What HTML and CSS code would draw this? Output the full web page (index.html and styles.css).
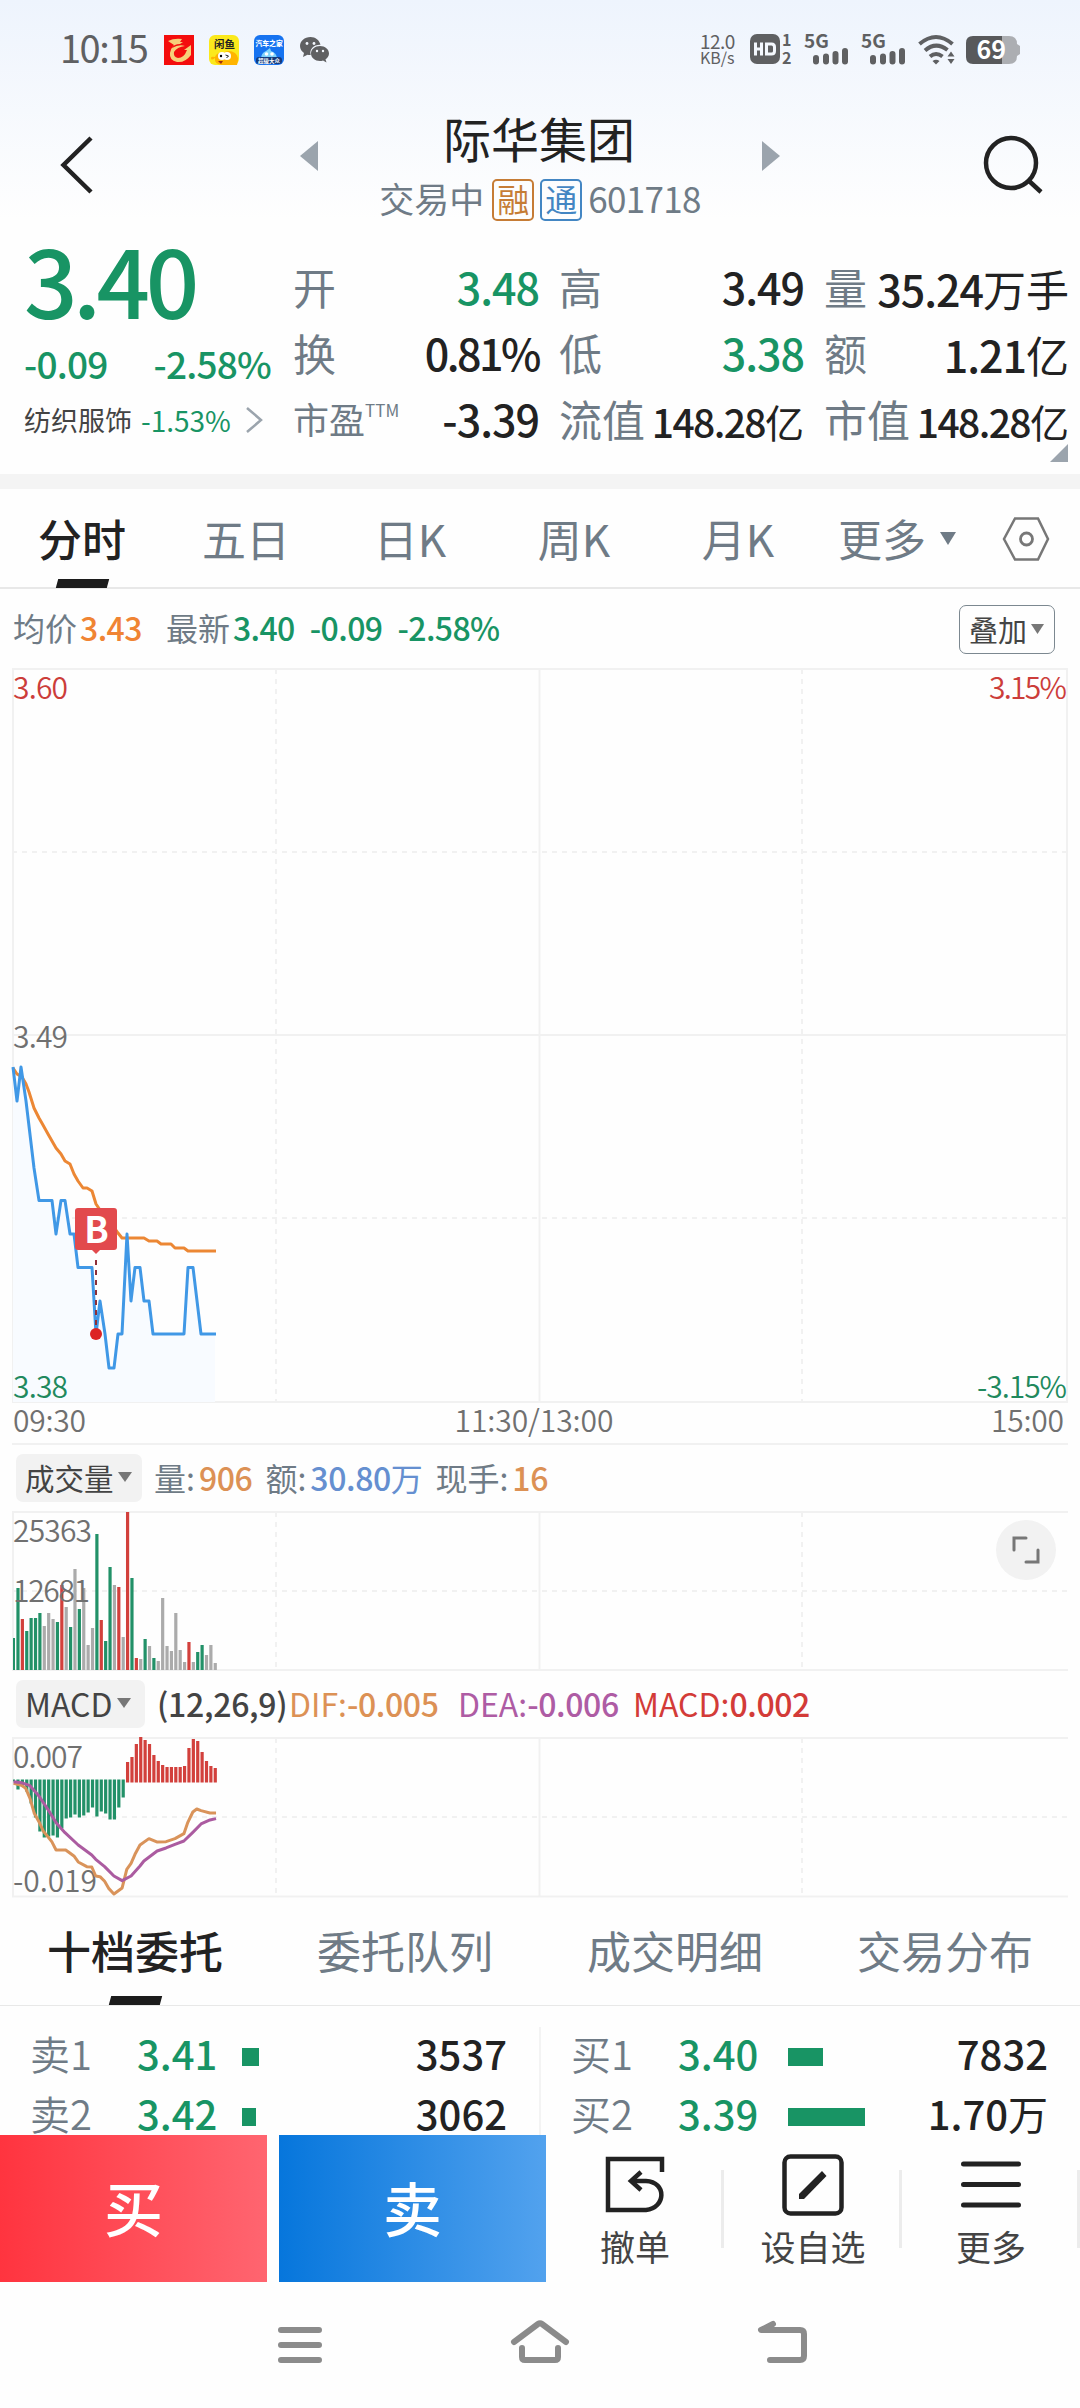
FILE: index.html
```html
<!DOCTYPE html>
<html lang="zh-CN">
<head>
<meta charset="utf-8">
<title>际华集团 601718</title>
<link rel="stylesheet" href="styles.css">
</head>
<body>
<div class="page">

<header class="top">
  <div class="status">
    <span class="clock">10:15</span>
    <svg class="app" width="30" height="30" viewBox="0 0 30 30"><rect width="30" height="30" fill="#f40d0d"/><path d="M4 6q6-3 14-2l-2 3h3l-3 2q-6 0-8 4 7-4 13-2-8 1-11 6-1 5 4 6 6 0 9-8l-3 0 7-5v10q-6 8-14 7-8-2-7-9 1-5 4-8-3-2-6-4z" fill="#f6cf7a"/></svg>
    <svg class="app" width="30" height="30" viewBox="0 0 30 30"><rect width="30" height="30" rx="6" fill="#fbe91c"/><path d="M13 30q-8-1-7-7-4 3-4 0 0-2 4-1 2-5 8-4 6-4 12 0 5 4 2 12z" fill="#ffb400"/><text x="5" y="13" font-size="10.500" font-weight="700" fill="#222">闲鱼</text><circle cx="13" cy="21" r="4" fill="#fff"/><circle cx="18" cy="21" r="4" fill="#fff"/><circle cx="12" cy="21" r="1.200"/><path d="M16.500 20l3 1-2 2" stroke="#222" fill="none"/><path d="M9 26h5l-2 3z" fill="#9c2b10"/></svg>
    <svg class="app" width="30" height="30" viewBox="0 0 30 30"><rect width="30" height="30" rx="6" fill="#1673f0"/><text x="1.500" y="11" font-size="6.800" font-weight="900" fill="#fff">汽车之家</text><path d="M7 24q0-6 5-8l4-3 1 3q6 2 6 8z" fill="#7fd2fb"/><circle cx="12.500" cy="19" r="1.800" fill="#fff"/><circle cx="18" cy="19" r="1.800" fill="#fff"/><rect x="2" y="22" width="26" height="7" rx="3" fill="#133a7c"/><text x="4" y="28" font-size="5.500" font-weight="700" fill="#fff">超级大众</text></svg>
    <svg class="wechat" width="29" height="26" viewBox="0 0 29 26"><path d="M10.500 0C4.500 0 0 4 0 9c0 3 1.500 5.300 4 7l-1 4 4.500-2.300q1.600.4 3.200.3C9 12 14 7.500 20.500 7.800 19.500 3.300 15.500 0 10.500 0z" fill="#5f6062"/><path d="M20 9c-5 0-9 3.300-9 7.500s4 7.500 9 7.500q1.500 0 3-.5L26.500 25.500l-1-3.200c2-1.400 3.500-3.400 3.500-5.800C29 12.300 25 9 20 9z" fill="#5f6062"/><g fill="#f4f8fe"><circle cx="7" cy="6.500" r="1.400"/><circle cx="14" cy="6.500" r="1.400"/><circle cx="17" cy="14" r="1.200"/><circle cx="23" cy="14" r="1.200"/></g></svg>
    <span class="speed"><b>12.0</b><i>KB/s</i></span>
    <svg class="sys" width="44" height="30" viewBox="0 0 44 30"><rect width="30" height="30" rx="7" fill="#5f6062"/><path d="M5.500 8.500v13M11.500 8.500v13M5.500 15h6" stroke="#f4f8fe" stroke-width="3" fill="none"/><path d="M16.500 10h5q3 0 3 3v4q0 3-3 3h-5z" stroke="#f4f8fe" stroke-width="3" fill="none"/><text x="32" y="12" class="tiny">1</text><text x="32" y="29.500" class="tiny">2</text></svg>
    <svg class="sys signal" width="46" height="30" viewBox="0 0 46 30"><text x="0" y="14" class="g5">5G</text><path d="M12 24v3.500M22 22.500v5M31.500 20v7.500M41 17v10.500" stroke="#5f6062" stroke-width="6" stroke-linecap="round"/></svg>
    <svg class="sys signal2" width="46" height="30" viewBox="0 0 46 30"><text x="0" y="14" class="g5">5G</text><path d="M12 24v3.500M22 22.500v5M31.500 20v7.500M41 17v10.500" stroke="#5f6062" stroke-width="6" stroke-linecap="round"/></svg>
    <svg class="wifi" width="37" height="30" viewBox="0 0 37 30"><path d="M1.500 9q16.500-14 33 0M7 15.500q11-9.500 22.500-.5M12 21.500q6-5 12.500 0" fill="none" stroke="#5f6062" stroke-width="4"/><path d="M14.500 26q3.500-2.500 7 0L18 29.500z" fill="#5f6062"/><path d="M29.500 21.500l3.500-5 3.500 5zM29.500 24l3.500 5 3.500-5z" fill="#5f6062"/></svg>
    <svg class="battery" width="54" height="28" viewBox="0 0 54 28"><path d="M36 0h7q8 0 8 8l3 2v8l-3 2q0 8-8 8h-7z" fill="#acaeb2"/><path d="M7 0h29v28H7q-7 0-7-7V7q0-7 7-7z" fill="#58595b"/><text x="10.500" y="23" class="pct">69</text></svg>
  </div>

  <div class="title-row">
    <svg class="back" width="34" height="58" viewBox="0 0 34 58"><path d="M31 2L3.500 29 31 56" fill="none" stroke="#222" stroke-width="4.500"/></svg>
    <svg class="prev" width="18" height="30"><path d="M18 0v30L0 15z" fill="#9ba4ad"/></svg>
    <div class="name">
      <h1>际华集团</h1>
      <div class="sub">交易中<span class="tag rong">融</span><span class="tag tong">通</span><span class="code">601718</span></div>
    </div>
    <svg class="next" width="18" height="30"><path d="M0 0v30l18-15z" fill="#9ba4ad"/></svg>
    <svg class="search" width="62" height="62" viewBox="0 0 62 62"><circle cx="28" cy="29" r="25" fill="none" stroke="#222" stroke-width="4.500"/><path d="M45 46l13 12" stroke="#222" stroke-width="4.500"/></svg>
  </div>

  <div class="quote">
    <div class="price">
      <div class="last">3.40</div>
      <div class="change"><span>-0.09</span><span>-2.58%</span></div>
      <div class="sector">纺织服饰<span class="green">-1.53%</span><svg width="19" height="28" viewBox="0 0 19 28"><path d="M2 2l14 12L2 26" fill="none" stroke="#9ba4ad" stroke-width="2.500"/></svg></div>
    </div>
    <div class="stats">
      <div><label>开</label><b class="green">3.48</b></div>
      <div><label>高</label><b>3.49</b></div>
      <div class="low"><label>量</label><b>35.24<em>万手</em></b></div>
      <div><label>换</label><b class="tight">0.81%</b></div>
      <div><label>低</label><b class="green">3.38</b></div>
      <div class="low"><label>额</label><b>1.21<em>亿</em></b></div>
      <div><label class="pe">市盈<sup>TTM</sup></label><b>-3.39</b></div>
      <div class="cap"><label>流值</label><b>148.28<em>亿</em></b></div>
      <div class="cap"><label>市值</label><b>148.28<em>亿</em></b></div>
    </div>
    <svg class="corner" width="18" height="18"><path d="M18 0v18H0z" fill="#9ba4ad"/></svg>
  </div>
</header>

<nav class="tabs">
  <a class="on">分时</a><a>五日</a><a>日K</a><a>周K</a><a>月K</a>
  <a class="more">更多<svg width="16" height="13"><path d="M0 0h16L8 13z" fill="#6f7b86"/></svg></a>
  <svg class="gear" width="48" height="44" viewBox="0 0 48 44"><path d="M13 1.500h23L46 22 36 42.500H13L2 22z" fill="none" stroke="#777" stroke-width="2.500"/><circle cx="24.500" cy="22" r="6" fill="none" stroke="#777" stroke-width="2.800"/></svg>
</nav>

<div class="info">
  <span>均价</span><b class="orange">3.43</b>
  <span class="latest">最新</span><b class="green">3.40</b><b class="green d1">-0.09</b><b class="green d2">-2.58%</b>
  <button class="overlay">叠加<svg width="13" height="10"><path d="M0 0h13L6.500 10z" fill="#777"/></svg></button>
</div>

<svg class="chart" width="1080" height="782" viewBox="0 664 1080 782">
  <g class="grid">
    <path d="M12 669H1068M12 1035H1068M12 1402H1068M13 669V1402M539.500 669V1402M1067 669V1402M12 1444H1068"/>
    <path class="dash" d="M12 852H1068M12 1218H1068M276 669V1402M802 669V1402"/>
  </g>
  <path d="M13 1067L17 1101 21 1067 26 1101 34 1168 39 1200.500H52L56 1234 61 1200.500H65L70 1234H74L78 1267.500H92L96 1334 100 1301 105 1334 109 1368H114L118 1334H122L127 1234 131 1301 135 1267.500H140L144 1301H149L153 1334H184L188 1267.500H193L201 1334H215V1402H13z" fill="#f8fbff"/>
  <polyline class="line avg" points="13,1068 17,1074 22,1077 26,1084 29,1092 34,1108 39,1118 43,1125 48,1134 52,1141 56,1148 61,1154 65,1161 70,1164 74,1174 78,1181 83,1188 87,1188 92,1191 96,1204 102,1213 109,1220 118,1233 122,1238 144,1238 149,1241 157,1241 161,1244 171,1244 175,1248 184,1248 188,1251 216,1251"/>
  <path class="line now" d="M13 1067L17 1101 21 1067 26 1101 34 1168 39 1200.500H52L56 1234 61 1200.500H65L70 1234H74L78 1267.500H92L96 1334 100 1301 105 1334 109 1368H114L118 1334H122L127 1234 131 1301 135 1267.500H140L144 1301H149L153 1334H184L188 1267.500H193L201 1334H216"/>
  <path d="M78 1208h36q3 0 3 3v36q0 3-3 3h-14l-4 4-4-4H78q-3 0-3-3v-36q0-3 3-3z" fill="#e24a4d"/>
  <text x="96.500" y="1243" class="buy">B</text>
  <path d="M96 1260V1326" stroke="#8e2f38" stroke-width="2" stroke-dasharray="5 5"/>
  <circle cx="96" cy="1334" r="6" fill="#dc2323"/>
  <g class="axis">
    <text x="13" y="698.500" class="up" textLength="55">3.60</text>
    <text x="1067" y="698.500" class="up end" textLength="78">3.15%</text>
    <text x="13" y="1048" textLength="55">3.49</text>
    <text x="13" y="1398" class="down" textLength="55">3.38</text>
    <text x="1067" y="1398" class="down end" textLength="90">-3.15%</text>
    <text x="13" y="1432" textLength="73">09:30</text>
    <text x="534" y="1432" class="mid" textLength="159">11:30/13:00</text>
    <text x="1064" y="1432" class="end" textLength="73">15:00</text>
  </g>
</svg>

<div class="bar">
  <button class="pill">成交量<svg width="14" height="10"><path d="M0 0h14L7 10z" fill="#777"/></svg></button>
  <span>量:</span><b class="tan">906</b>
  <span class="g1">额:</span><b class="blue">30.80<em>万</em></b>
  <span class="g2">现手:</span><b class="tan">16</b>
</div>

<div class="panel">
<svg class="chart" width="1080" height="166" viewBox="0 1508 1080 166">
  <g class="grid">
    <path d="M12 1512H1068M12 1670H1068M13 1512V1670M539.500 1512V1670"/>
    <path class="dash" d="M12 1591H1068M276 1512V1670M802 1512V1670"/>
  </g>
  <g id="vol"></g>
  <g class="axis">
    <text x="13" y="1542" textLength="79">25363</text>
    <text x="13" y="1602" textLength="77">12681</text>
  </g>
</svg>
<button class="expand"><svg width="28" height="28" viewBox="0 0 28 28"><path d="M2 14V2h12M14 26h12V14" fill="none" stroke="#777" stroke-width="3" stroke-linecap="round"/></svg></button>
</div>

<div class="bar macd">
  <button class="pill">MACD<svg width="14" height="10"><path d="M0 0h14L7 10z" fill="#777"/></svg></button>
  <b class="args">(12,26,9)</b>
  <span class="tan dif">DIF:<b>-0.005</b></span>
  <span class="purple dea">DEA:<b>-0.006</b></span>
  <span class="red md">MACD:<b>0.002</b></span>
</div>

<svg class="chart" width="1080" height="166" viewBox="0 1734 1080 166">
  <g class="grid">
    <path d="M12 1738H1068M12 1896.500H1068M13 1738V1896M539.500 1738V1896"/>
    <path class="dash" d="M12 1817H1068M276 1738V1896M802 1738V1896"/>
  </g>
  <g class="axis">
    <text x="13" y="1768" textLength="70">0.007</text>
    <text x="13" y="1892" textLength="84">-0.019</text>
  </g>
  <g id="macd"></g>
  <g transform="translate(0 1660) scale(.3571 .3333)">
    <polyline class="line dif-line" points="38,370 60,376 72,385 84,415 96,460 109,485 121,513 145,545 157,570 184,570 207,588 219,606 243,620 257,621 268,648 280,650 293,664 305,686 319,702 342,684 355,628 367,610 378,583 392,555 417,536 439,546 465,545 490,536 515,521 526,487 540,456 551,447 563,452 588,459 605,459"/>
    <polyline class="line dea-line" points="38,365 60,368 84,377 109,408 134,448 157,488 182,518 219,555 257,585 268,598 293,620 319,648 342,662 367,648 392,618 403,603 440,573 465,564 490,553 515,543 540,517 563,492 588,480 605,476"/>
  </g>
</svg>

<nav class="tabs tabs2">
  <a class="on">十档委托</a><a>委托队列</a><a>成交明细</a><a>交易分布</a>
</nav>

<div class="book">
  <div class="side">
    <div class="row"><label>卖1</label><b class="green">3.41</b><i style="width:17px"></i><b class="qty">3537</b></div>
    <div class="row"><label>卖2</label><b class="green">3.42</b><i style="width:14px"></i><b class="qty">3062</b></div>
  </div>
  <div class="side bid">
    <div class="row"><label>买1</label><b class="green">3.40</b><i style="width:35px"></i><b class="qty">7832</b></div>
    <div class="row"><label>买2</label><b class="green">3.39</b><i style="width:77px"></i><b class="qty">1.70<em>万</em></b></div>
  </div>
</div>

<footer class="actions">
  <button class="trade buybtn">买</button>
  <button class="trade sellbtn">卖</button>
  <div class="act"><svg width="62" height="62" viewBox="0 0 62 62"><path d="M58 18V5H4v51h38c20-2 21-28 0-29H28" fill="none" stroke="#222" stroke-width="4.500"/><path d="M37 18L27 27l10 9" fill="none" stroke="#222" stroke-width="4.500"/></svg>撤单</div>
  <div class="act"><svg width="62" height="62" viewBox="0 0 62 62"><rect x="2.500" y="2.500" width="57" height="57" rx="6" fill="none" stroke="#222" stroke-width="4.500"/><path d="M17 40L40 17l4.500 5L22 45h-5z" fill="#222"/></svg>设自选</div>
  <div class="act"><svg width="62" height="62" viewBox="0 0 62 62"><path d="M3.500 10h55M3.500 30.500h55M3.500 51h55" stroke="#222" stroke-width="5" stroke-linecap="round"/></svg>更多</div>
</footer>

<div class="sysnav">
  <svg width="44" height="44" viewBox="0 0 44 44"><path d="M3 10h38M3 25h38M3 40h38" class="nv"/></svg>
  <svg width="60" height="44" viewBox="0 0 60 44"><path d="M4 22L28 4q2-1.500 4 0L56 22M12 28v9q0 3 3 3h30q3 0 3-3v-9" class="nv"/></svg>
  <svg width="50" height="44" viewBox="0 0 50 44"><path d="M15 4L3 10h39q4 0 4 4v22q0 4-4 4H12" class="nv"/></svg>
</div>

</div>
<script>
  const NS = "http://www.w3.org/2000/svg";
  const STEP = 4.384;

  function bar(parent, i, top, bottom, color) {
    const r = document.createElementNS(NS, "rect");
    r.setAttribute("x", i === 0 ? 13 : 12 + i * STEP);
    r.setAttribute("y", top);
    r.setAttribute("width", i === 0 ? 2 : 3.2);
    r.setAttribute("height", bottom - top);
    r.setAttribute("fill", color);
    parent.appendChild(r);
  }

  // height of each minute: g down, r up, n unchanged
  const vol = "g32 g82 r51 g39 g52 g52 g57 n44 n57 n51 g48 r85 n63 g43 n101 g61 n82 n25 n42 g136 r50 g29 g103 n85 r83 n33 r158 g92 r12 n11 g31 n24 g12 n9 n72 n24 n19 n57 n20 n8 r28 n8 g18 g25 n15 n25 n7".split(" ");
  const colors = { g: "#229168", r: "#d2403c", n: "#ababab" };
  vol.forEach((v, i) => bar(document.getElementById("vol"), i, 1670 - v.slice(1), 1670, colors[v[0]]));

  const hist = [-2, -10, -7, -12, -24, -38, -52, -58, -57, -56, -58, -49, -39, -38, -35, -38, -36, -33, -28, -37, -32, -34, -40, -40, -28, -18,
    20, 25, 38, 45, 42, 38, 27, 21, 17, 15, 15, 15, 15, 16, 34, 43, 41, 30, 21, 16, 14];
  hist.forEach((h, i) => h < 0
    ? bar(document.getElementById("macd"), i, 1779.5, 1779.5 - h, "#229168")
    : bar(document.getElementById("macd"), i, 1782 - h, 1782.5, "#d2403c"));
</script>
</body>
</html>
```
FILE: styles.css
```css
* {
  box-sizing: border-box;
}
body {
  margin: 0;
  background: #fefefe;
  color: #222;
  font-family: "Noto Sans CJK SC", "Noto Sans", sans-serif;
}
svg {
  display: block;
  flex: none;
  overflow: visible;
}
svg text {
  font-family: "Noto Sans CJK SC", sans-serif;
}
button {
  border: none;
  padding: 0;
  margin: 0;
  font-family: inherit;
}
b {
  font-weight: 500;
}
em, i {
  font-style: normal;
}
.page {
  width: 1080px;
  height: 2408px;
  overflow: hidden;
}
.green { color: #189464; }
.orange { color: #f08433; }
.tan { color: #dc9155; }
.blue { color: #658fd0; }
.purple { color: #ae5ca4; }
.red { color: #d33b38; }

/* header */
.top {
  height: 489px;
  border-bottom: 15px solid #f4f4f4;
  background: linear-gradient(#eef4fd, #fefefe 220px);
}
.status {
  height: 100px;
  display: flex;
  align-items: center;
  padding-left: 60px;
}
.clock {
  width: 104px;
  font-size: 38px;
  line-height: 40px;
  letter-spacing: -1.500px;
  color: #5f6062;
  margin-top: -6px;
}
.app {
  margin-right: 15px;
}
.wechat {
  width: 29px;
  margin-left: 1px;
}
.speed {
  margin-left: 371px;
  width: 37px;
  display: flex;
  flex-direction: column;
  color: #5f6062;
  line-height: 17px;
  margin-top: -3px;
}
.speed b {
  font-size: 19px;
  font-weight: 400;
  letter-spacing: -.5px;
}
.speed i {
  font-size: 16px;
}
.sys {
  margin-left: 13px;
  margin-top: -2px;
}
.signal { margin-left: 10px; }
.signal2 { margin-left: 11px; }
.wifi { margin-left: 11px; }
.battery { margin-left: 11px; }
.tiny {
  font-size: 16px;
  font-weight: 700;
  fill: #5f6062;
}
.g5 {
  font-size: 19px;
  font-weight: 700;
  fill: #5f6062;
}
.pct {
  font-size: 25px;
  font-weight: 700;
  fill: #fff;
}
.title-row {
  display: grid;
  grid-template-columns: 300px 18px 1fr 18px 300px;
  height: 128px;
}
.back {
  margin: 36px 0 0 60px;
}
.prev, .next {
  margin-top: 41px;
}
.search {
  margin: 34px 0 0 203px;
}
.name {
  text-align: center;
  padding-top: 7px;
}
h1 {
  margin: 0 0 12px -2px;
  font-size: 48px;
  font-weight: 400;
  line-height: 60px;
}
.sub {
  display: flex;
  justify-content: center;
  line-height: 38px;
  font-size: 35px;
  color: #6f7b86;
}
.tag {
  width: 42px;
  height: 42px;
  margin-left: 6px;
  border: 2px solid;
  border-radius: 5px;
  font-size: 32px;
  line-height: 35px;
}
.rong { color: #c67c35; margin-left: 8px; }
.tong { color: #4386c3; }
.code {
  margin-left: 6px;
  letter-spacing: -.7px;
}
.quote {
  display: flex;
  position: relative;
}
.price {
  width: 294px;
  padding-left: 24px;
  color: #189464;
}
.last {
  font-size: 94px;
  font-weight: 500;
  line-height: 100px;
  letter-spacing: -4.500px;
}
.change {
  display: flex;
  justify-content: space-between;
  width: 247px;
  margin-top: 10px;
  font-size: 37px;
  font-weight: 500;
  line-height: 50px;
  letter-spacing: -.8px;
}
.sector {
  display: flex;
  align-items: center;
  margin-top: 13px;
  font-size: 27px;
  line-height: 38px;
  color: #444;
}
.sector span {
  margin-left: 9px;
  font-size: 28px;
}
.sector svg {
  margin-left: 14px;
}
.stats {
  display: grid;
  grid-template-columns: 245px 244px 244px;
  grid-auto-rows: 66px;
  column-gap: 21px;
  padding-top: 25px;
}
.stats div {
  display: flex;
  justify-content: space-between;
  line-height: 66px;
  white-space: nowrap;
}
.stats label {
  font-size: 43px;
  color: #6f7b86;
  margin-left: -1px;
}
.stats b {
  font-size: 43px;
  letter-spacing: -1px;
}
.stats em {
  font-weight: 400;
  letter-spacing: 0;
}
.stats .tight {
  letter-spacing: -2.500px;
}
.stats .low b {
  padding-top: 2px;
}
.stats .pe {
  font-size: 36px;
}
.pe sup {
  font-size: 17px;
  line-height: 0;
  vertical-align: 17px;
}
.stats .cap b {
  font-size: 39px;
  letter-spacing: -1.600px;
  padding-top: 3px;
}
.corner {
  position: absolute;
  right: 12px;
  top: 216px;
}

/* tabs */
.tabs {
  display: flex;
  height: 100px;
  border-bottom: 2px solid #e8e8e8;
  font-size: 44px;
  line-height: 98px;
  color: #6f7b86;
}
.tabs a {
  width: 164px;
  text-align: center;
  position: relative;
}
.tabs .on {
  color: #222;
  font-weight: 500;
}
.tabs .on::after {
  content: "";
  position: absolute;
  left: 50%;
  bottom: -1px;
  width: 51px;
  height: 9px;
  margin-left: -25px;
  background: #1c1c1c;
  transform: skewX(-15deg);
}
.tabs .more {
  display: flex;
  align-items: center;
  width: 182px;
  padding-left: 18px;
  gap: 14px;
}
.tabs .gear {
  margin: 28px 0 0;
}

/* price line */
.info {
  height: 75px;
  display: flex;
  padding-left: 13px;
  font-size: 32px;
  line-height: 76px;
  color: #6f7b86;
}
.info b {
  margin-left: 3px;
  letter-spacing: -.6px;
}
.latest { margin-left: 24px; }
.info .d1 { margin-left: 15px; }
.info .d2 { margin-left: 15px; }
.overlay {
  display: flex;
  align-items: center;
  gap: 4px;
  width: 96px;
  height: 49px;
  margin: 16px 25px 0 auto;
  padding-left: 9px;
  padding-bottom: 2px;
  background: none;
  border: 1.500px solid #7c8890;
  border-radius: 7px;
  font-size: 29px;
  color: #444;
}
.grid path {
  fill: none;
  stroke: #f1f1f1;
  stroke-width: 2;
}
.grid .dash {
  stroke-dasharray: 5 5;
}
.line {
  fill: none;
  stroke-width: 3;
  stroke-linejoin: round;
  vector-effect: non-scaling-stroke;
}
.avg { stroke: #ec8734; }
.now { stroke: #4098e6; }
.dif-line { stroke: #d9935a; }
.dea-line { stroke: #ab5ba0; }
.buy {
  font-size: 36px;
  font-weight: 700;
  fill: #fff;
  text-anchor: middle;
}
.axis text {
  font-size: 30px;
  font-weight: 350;
  fill: #707070;
}
.axis .up { fill: #cc3d3a; }
.axis .down { fill: #21895d; }
.axis .end { text-anchor: end; }
.axis .mid { text-anchor: middle; }

/* indicator headers */
.bar {
  height: 62px;
  display: flex;
  padding: 8px 0 0 16px;
  font-size: 32px;
  line-height: 47px;
  color: #6f7b86;
  white-space: nowrap;
}
.pill {
  display: flex;
  align-items: center;
  gap: 4px;
  width: 126px;
  height: 48px;
  margin-right: 12px;
  padding: 0 0 2px 9px;
  background: #f2f2f2;
  border-radius: 7px;
  font-size: 29.500px;
  color: #444;
}
.bar b {
  margin-left: 4px;
  letter-spacing: -.4px;
}
.bar em {
  font-weight: 400;
}
.g1 { margin-left: 13px; }
.g2 { margin-left: 13px; }
.macd {
  height: 60px;
  padding-top: 6px;
}
.macd .pill {
  width: 129px;
  padding-left: 9px;
  margin-right: 12px;
  font-size: 32px;
}
.macd b {
  margin-left: 0;
}
.macd .args {
  color: #444;
  width: 132px;
  letter-spacing: -.3px;
}
.dif { width: 169px; }
.dea { width: 175px; }
.panel {
  position: relative;
}
.expand {
  position: absolute;
  right: 24px;
  top: 12px;
  width: 60px;
  height: 60px;
  border-radius: 50%;
  background: #f2f2f2;
  display: flex;
  align-items: center;
  justify-content: center;
}

/* order book */
.tabs2 {
  height: 106px;
  line-height: 100px;
  border-bottom-width: 1px;
}
.tabs2 a {
  width: 270px;
}
.tabs2 .on::after {
  bottom: 0;
}
.book {
  display: flex;
  height: 129px;
  padding-top: 21px;
  overflow: hidden;
}
.side {
  width: 541px;
  padding-left: 30px;
  border-right: 2px solid #f3f3f3;
}
.bid {
  width: 539px;
  border: none;
}
.row {
  display: flex;
  align-items: center;
  height: 60px;
  font-size: 40px;
  line-height: 50px;
}
.row label {
  width: 107px;
  margin-top: -8px;
  font-size: 40px;
  font-weight: 350;
  color: #6f7b86;
}
.row b {
  width: 105px;
  margin-top: -8px;
}
.bid b {
  width: 110px;
}
.row i {
  height: 18px;
  background: #189464;
}
.row .qty {
  width: auto;
  margin: -8px 32px 0 auto;
}
.row em {
  font-weight: 400;
}

/* bottom bar */
.actions {
  display: flex;
  height: 147px;
}
.trade {
  width: 267px;
  margin-right: 12px;
  padding-bottom: 4px;
  color: #fff;
  font-size: 59px;
  font-weight: 500;
}
.buybtn {
  background: linear-gradient(90deg, #ff343f, #ff6570);
}
.sellbtn {
  background: linear-gradient(90deg, #0676dc, #52a2ee);
  margin-right: 0;
}
.act {
  flex: 1;
  display: flex;
  flex-direction: column;
  align-items: center;
  padding-top: 19px;
  font-size: 35px;
  line-height: 52px;
  color: #444;
  background: linear-gradient(#ececec, #ececec) right 35px / 3px 78px no-repeat;
}
.act svg {
  margin-bottom: 4px;
}
.sysnav {
  display: flex;
  justify-content: center;
  gap: 188px;
  padding: 38px 0 0 5px;
}
.nv {
  fill: none;
  stroke: #8b8b8b;
  stroke-width: 6;
  stroke-linecap: round;
  stroke-linejoin: round;
}
```
